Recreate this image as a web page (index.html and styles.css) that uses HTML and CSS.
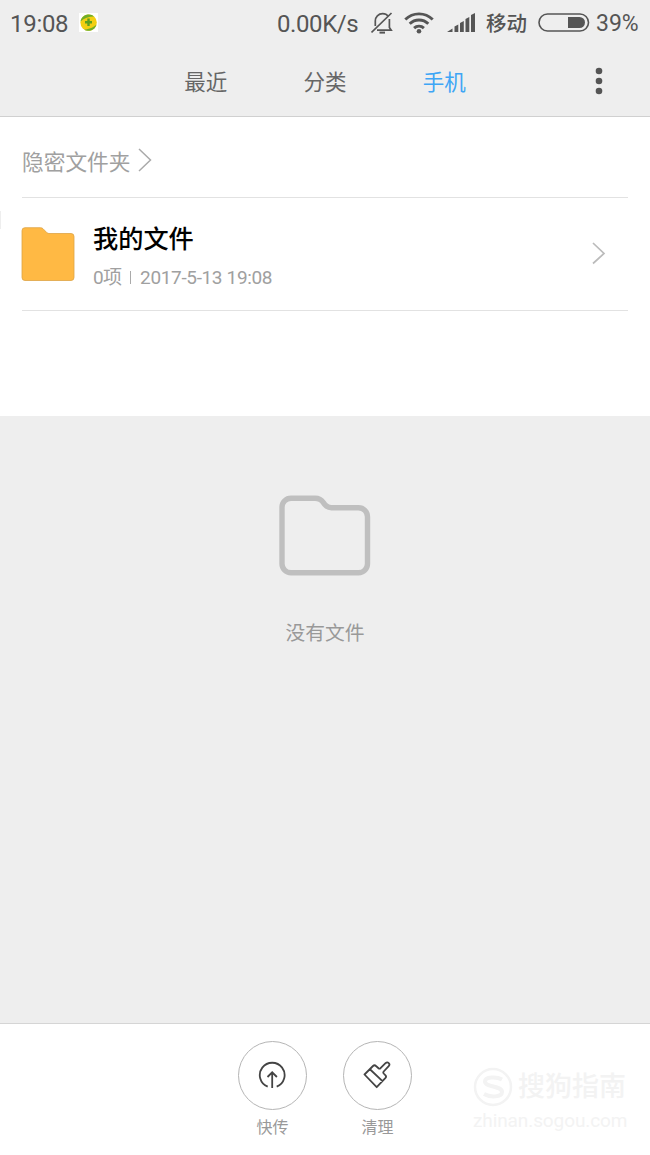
FILE: index.html
```
<!DOCTYPE html>
<html lang="zh-CN">
<head>
    <meta charset="UTF-8">
    <meta name="viewport" content="width=device-width, initial-scale=1.0">
    <title>文件管理</title>
    <link rel="stylesheet" href="styles.css">
</head>
<body>
    <header class="header">
        <div class="status-bar">
            <span class="time">19:08</span>
            <svg class="app-badge" width="19" height="19" viewBox="0 0 19 19">
                <rect width="19" height="19" fill="#fff"/>
                <circle cx="9.6" cy="9.6" r="8.2" fill="#f3cf12"/>
                <path d="M1.500 8.500C2 4 6 1.300 10 1.400c2 0 4 .8 5 2C10 3.500 5 5 1.500 8.500zM5 16.400a8.200 8.200 0 0 0 12.500-5C15 14 10 16.500 5 16.400z" fill="#6fae2a"/>
                <path d="M9.500 5.500v7.500M6 9.200h7" stroke="#5ca01f" stroke-width="2.400"/>
            </svg>

            <div class="status-right">
                <span class="speed">0.00K/s</span>
                <!-- muted bell -->
                <svg class="bell" width="22" height="22" viewBox="0 0 22 22" fill="none" stroke="#555" stroke-width="1.700">
                    <path d="M4.300 14V9c0-4 3-7.300 7.400-7.300 2.300 0 4.300 1 5.500 2.600M18.400 7v8.500l1.800 2.700H6M.500 20.500L20.500 1"/>
                    <path d="M8.500 20.600h5.500" stroke-width="2"/>
                </svg>
                <svg class="wifi" width="30" height="22" viewBox="0 0 30 22" fill="none" stroke="#555" stroke-width="2.900">
                    <path d="M1.300 7.500a19.500 19.500 0 0 1 27.400 0M5.700 11.800a13.200 13.200 0 0 1 18.600 0M10.100 16.100a7 7 0 0 1 9.800 0"/>
                    <circle cx="15" cy="19.300" r="2.300" fill="#555" stroke="none"/>
                </svg>
                <svg class="signal" width="28" height="19" viewBox="0 0 28 19" fill="#555">
                    <path d="M0 19l5.500-3.500V19zM7.500 13.500l3.800-2V19H7.500zM13 10l3.800-2v11H13zM18.500 6l3.800-2v15h-3.800zM24 2l4-2v19h-4z"/>
                </svg>
                <span class="carrier">移动</span>
                <svg class="battery" width="52" height="19" viewBox="0 0 52 19">
                    <rect x="1" y="1" width="49.500" height="17" rx="8.500" fill="none" stroke="#555" stroke-width="1.600"/>
                    <path d="M30 4h11.500a5.500 5.500 0 0 1 0 11H30z" fill="#555"/>
                </svg>
                <span class="percent">39%</span>
            </div>
        </div>

        <nav class="tabs">
            <a class="tab">最近</a>
            <a class="tab">分类</a>
            <a class="tab active">手机</a>
            <svg class="more" width="8" height="28" viewBox="0 0 8 28" fill="#555">
                <circle cx="4" cy="4" r="3.300"/>
                <circle cx="4" cy="14" r="3.300"/>
                <circle cx="4" cy="24" r="3.300"/>
            </svg>
        </nav>
    </header>

    <section class="files">
        <span class="edge-mark"></span>
        <div class="private">
            <span>隐密文件夹</span>
            <svg width="14" height="24" viewBox="0 0 14 24" fill="none" stroke="#aaa" stroke-width="1.500">
                <path d="M1 1l11.500 11L1 23"/>
            </svg>
        </div>
        <div class="folder-row">
            <svg class="folder" width="54" height="55" viewBox="0 0 54 55">
                <path d="M4 .700h15.500c1 0 1.800.300 2.500 1L26 5.800c.600.500 1.200.700 2 .700h22a3 3 0 0 1 3 3v41a3 3 0 0 1-3 3H4a3 3 0 0 1-3-3V3.700A3 3 0 0 1 4 .700z" fill="#ffb944" stroke="#dda345" stroke-width=".8"/>
            </svg>
            <div class="folder-info">
                <div class="folder-name">我的文件</div>
                <div class="folder-meta"><span class="count">0项</span><i class="divider"></i><span class="date">2017-5-13 19:08</span></div>
            </div>
            <svg class="arrow" width="14" height="24" viewBox="0 0 14 24" fill="none" stroke="#bbb" stroke-width="1.700">
                <path d="M1 1l11 10.500L1 21.500"/>
            </svg>
        </div>
    </section>

    <main class="empty">
        <svg width="92" height="82" viewBox="0 0 92 82" fill="none" stroke="#bfbfbf" stroke-width="5.400">
            <path d="M12 3.200h24c4 0 6.500 1.500 8.500 4.500 2.500 4 4.500 5 8 5h27c5 0 9 4 9 9v47c0 5-4 9-9 9H12c-5 0-9-4-9-9v-56.500c0-5 4-9 9-9z"/>
        </svg>
        <p>没有文件</p>
    </main>

    <footer class="toolbar">
        <div class="tool">
            <div class="circle">
                <svg width="28" height="28" viewBox="0 0 28 28" fill="none" stroke="#444" stroke-width="1.800">
                    <path d="M9.700 25.700A12.400 12.400 0 1 1 18.700 25.700M14.200 27V11.500M9.500 16l4.700-4.700L18.900 16"/>
                </svg>
            </div>
            <span>快传</span>
        </div>
        <div class="tool">
            <div class="circle">
                <svg width="28" height="28" viewBox="0 0 28 28" fill="none" stroke="#444" stroke-width="1.800" stroke-linejoin="round">
                    <path d="M1.500 13.500L10 5c1-1 2-1 3 0l2.500 2.200c.700.600 1.300.600 2 0l5-5c2.300-2 5.200.800 3.200 3l-5 5.300c-.6.700-.6 1.300 0 2l1.600 1.700c1 1 1 2 0 3l-8.600 9zM7.200 8.500L20 20.700"/>
                </svg>
            </div>
            <span>清理</span>
        </div>
        <div class="watermark">
            <div class="brand">
                <svg width="40" height="40" viewBox="0 0 40 40" fill="none" stroke="#f3f3f3">
                    <circle cx="20" cy="20" r="18" stroke-width="2.500"/>
                    <path d="M29 12.500c-5-3-17-3-17 2 0 6 17 4 17 10.500 0 5.500-12 5.500-18 2" stroke-width="4"/>
                </svg>
                <span>搜狗指南</span>
            </div>
            <div class="site">zhinan.sogou.com</div>
        </div>
    </footer>
</body>
</html>
```
FILE: styles.css
```
* {
    margin: 0;
    padding: 0;
    box-sizing: border-box;
}

body {
    width: 650px;
    height: 1155px;
    display: flex;
    flex-direction: column;
    background-color: #eee;
    font-family: Roboto, "Noto Sans CJK SC", sans-serif;
    overflow: hidden;
}

svg {
    display: block;
    flex: none;
}

/* status bar + tabs */
.header {
    height: 117px;
    border-bottom: 1px solid #d0d0d0;
    color: #555;
}

.status-bar {
    height: 45px;
    display: flex;
    align-items: center;
    padding: 0 11px 0 10px;
    font-size: 24px;
    line-height: 46px;
    white-space: nowrap;
}

.status-bar span {
    padding-top: 2px;
}

.time {
    width: 69px;
    letter-spacing: -0.3px;
}

.status-right {
    display: flex;
    align-items: center;
    margin-left: auto;
}

.speed {
    width: 94px;
    letter-spacing: -0.4px;
}

.bell {
    margin-right: 11px;
}

.wifi {
    margin-right: 13px;
}

.signal {
    margin-right: 11px;
}

.carrier {
    width: 52px;
    font-size: 20.500px;
    font-weight: 500;
}

.battery {
    margin-right: 6px;
}

.percent {
    width: 43px;
    font-size: 23px;
}

.tabs {
    height: 71px;
    display: flex;
    align-items: center;
    padding-left: 146px;
}

.tab {
    width: 119.300px;
    text-align: center;
    font-size: 21.500px;
    color: #666;
}

.tab.active {
    color: #3ea6f5;
}

.more {
    margin-left: 91px;
}

/* folder list */
.files {
    position: relative;
    height: 299px;
    padding: 0 22px;
    background-color: #fff;
}

.edge-mark {
    position: absolute;
    left: 0;
    top: 94px;
    width: 1px;
    height: 18px;
    background-color: #eee;
}

.private {
    height: 81px;
    display: flex;
    align-items: center;
    gap: 8px;
    padding-top: 6px;
    border-bottom: 1px solid #e2e2e2;
    font-size: 21.700px;
    color: #a0a0a0;
}

.folder-row {
    height: 113px;
    display: flex;
    align-items: center;
    border-bottom: 1px solid #e2e2e2;
}

.folder {
    margin-left: -1px;
}

.folder-info {
    flex: 1;
    margin-left: 18px;
    padding-top: 9px;
}

.folder-name {
    font-size: 25.200px;
    font-weight: 500;
    line-height: 38px;
    color: #000;
}

.folder-meta {
    display: flex;
    align-items: center;
    font-size: 19px;
    line-height: 38px;
    color: #a0a0a0;
}

.count {
    letter-spacing: -0.800px;
}

.date {
    letter-spacing: -0.350px;
}

.divider {
    width: 1px;
    height: 13px;
    margin: 0 9px;
    background-color: #aaa;
}

.arrow {
    margin-right: 22px;
}

/* nothing here yet */
.empty {
    height: 607px;
    display: flex;
    flex-direction: column;
    align-items: center;
    padding-top: 79px;
}

.empty p {
    margin-top: 42px;
    font-size: 19.800px;
    line-height: 30px;
    color: #999;
}

/* bottom toolbar */
.toolbar {
    position: relative;
    height: 132px;
    display: flex;
    justify-content: center;
    gap: 36px;
    padding-top: 17px;
    border-top: 1px solid #d5d5d5;
    background-color: #fff;
}

.tool {
    width: 69px;
    text-align: center;
    font-size: 16px;
    line-height: 35px;
    color: #999;
}

.circle {
    height: 69px;
    display: flex;
    align-items: center;
    justify-content: center;
    padding: 0 2px 2px 0;
    border: 1px solid #b5b5b5;
    border-radius: 50%;
}

.watermark {
    position: absolute;
    left: 473px;
    top: 41px;
    color: #f3f3f3;
}

.brand {
    display: flex;
    align-items: center;
    gap: 5px;
    font-size: 27px;
    font-weight: 500;
    line-height: 44px;
}

.site {
    font-size: 19px;
    line-height: 24px;
    letter-spacing: -0.100px;
}
```
